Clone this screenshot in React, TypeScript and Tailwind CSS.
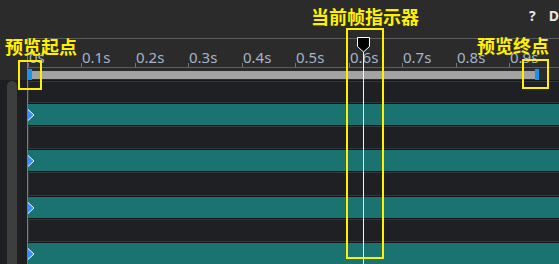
import React from "react";

const ticks = [
  { label: "0s", w: 53 },
  { label: "0.1s", w: 54 },
  { label: "0.2s", w: 53 },
  { label: "0.3s", w: 54 },
  { label: "0.4s", w: 53 },
  { label: "0.5s", w: 54 },
  { label: "0.6s", w: 53 },
  { label: "0.7s", w: 54 },
  { label: "0.8s", w: 53 },
  { label: "0.9s", w: 54 },
];

const tracks = ["dark-first", "teal", "dark", "teal", "dark", "teal", "dark", "teal"];

function KeyMarker() {
  return (
    <svg width="8" height="12" viewBox="0 0 8 12" className="-ml-[1px] mt-[5px] block">
      <polygon points="0.5,0 6.5,6 0.5,12" fill="#3b8cff" />
      <polyline points="1,0.5 7,6 1,11.5" fill="none" stroke="#ffffff" strokeWidth="1" />
    </svg>
  );
}

function DarkRow({ first }: { first?: boolean }) {
  return (
    <div className={`${first ? "h-[25px]" : "h-[27px]"} flex border-y border-[#151517]`}>
      <div className="flex-1 border border-r-0 border-[#38383b] bg-[#1f2023]" />
    </div>
  );
}

export default function App() {
  return (
    <div
      className="relative w-[559px] h-[264px] overflow-hidden bg-[#2b2b2c]"
      style={{ fontFamily: '"Noto Sans", "Noto Sans CJK SC", sans-serif' }}
    >
      {/* top bar */}
      <div className="h-[38px] flex items-start pl-[529px] pt-[9px] text-[14px] leading-[14px] font-bold text-[#e6e6e6]">
        <span className="w-[26px]">?</span>
        <span>D</span>
      </div>

      {/* ruler */}
      <div className="flex h-[42px]">
        <div className="w-[27px] shrink-0" />
        <div className="flex-1 border-l border-t border-l-[#7a7a7a] border-t-[#5c5c5c] flex flex-col">
          <div className="flex h-[28px]">
            {ticks.map((t) => (
              <div key={t.label} className="flex items-end shrink-0" style={{ width: t.w }}>
                <div className="w-px h-[4px] bg-[#767676]" />
                <span className="text-[15px] leading-[15px] mb-[2px] text-[#a4b3c6] whitespace-nowrap">
                  {t.label}
                </span>
              </div>
            ))}
          </div>
          <div className="h-px bg-[#5e5e5e]" />
          <div className="relative mt-[3px] h-[8px] w-[511px] bg-[#a3a3a3]">
            <div className="absolute left-0 -top-[2px] w-[4px] h-[11px] bg-[#1596ee]" />
            <div className="absolute right-0 -top-[2px] w-[4px] h-[11px] bg-[#1596ee]" />
          </div>
        </div>
      </div>

      {/* tracks */}
      <div className="flex h-[184px] bg-[#1e1f22]">
        <div className="w-[27px] shrink-0 pl-[7px] pt-[1px]">
          <div className="w-[10px] h-full rounded-t-[5px] bg-[#3e3e3f]" />
        </div>
        <div className="flex-1 border-l border-[#7a7a7a] flex flex-col">
          {tracks.map((t, i) =>
            t === "teal" ? (
              <div key={i} className="h-[21px] shrink-0 bg-[#1a7370] flex items-start">
                <KeyMarker />
              </div>
            ) : (
              <DarkRow key={i} first={t === "dark-first"} />
            )
          )}
        </div>
      </div>

      {/* playhead */}
      <div className="absolute left-[363px] top-[50px] bottom-0 w-px bg-[#f2f2f2]" />
      <svg width="13" height="16" viewBox="0 0 13 16" className="absolute left-[357px] top-[37px]">
        <polygon points="0.5,0.5 12.5,0.5 12.5,9.5 6.5,15 0.5,9.5" fill="#000000" stroke="#ffffff" strokeWidth="1" />
      </svg>

      {/* annotations */}
      <div className="absolute left-[18px] top-[60px] w-[24px] h-[30px] border-2 border-[#fff000]" />
      <div className="absolute left-[522px] top-[59px] w-[27px] h-[30px] border-2 border-[#fff000]" />
      <div className="absolute left-[346px] top-[28px] w-[38px] h-[231px] border-2 border-[#fff000]" />

      <div
        className="absolute left-[311px] top-[7px] text-[18px] leading-[18px] font-bold text-[#fff000] whitespace-nowrap"
        style={{ fontFamily: '"Noto Sans CJK SC", sans-serif' }}
      >
        当前帧指示器
      </div>
      <div
        className="absolute left-[5px] top-[37px] text-[18px] leading-[18px] font-bold text-[#fff000] whitespace-nowrap"
        style={{ fontFamily: '"Noto Sans CJK SC", sans-serif' }}
      >
        预览起点
      </div>
      <div
        className="absolute left-[477px] top-[36px] text-[18px] leading-[18px] font-bold text-[#fff000] whitespace-nowrap"
        style={{ fontFamily: '"Noto Sans CJK SC", sans-serif' }}
      >
        预览终点
      </div>
    </div>
  );
}
